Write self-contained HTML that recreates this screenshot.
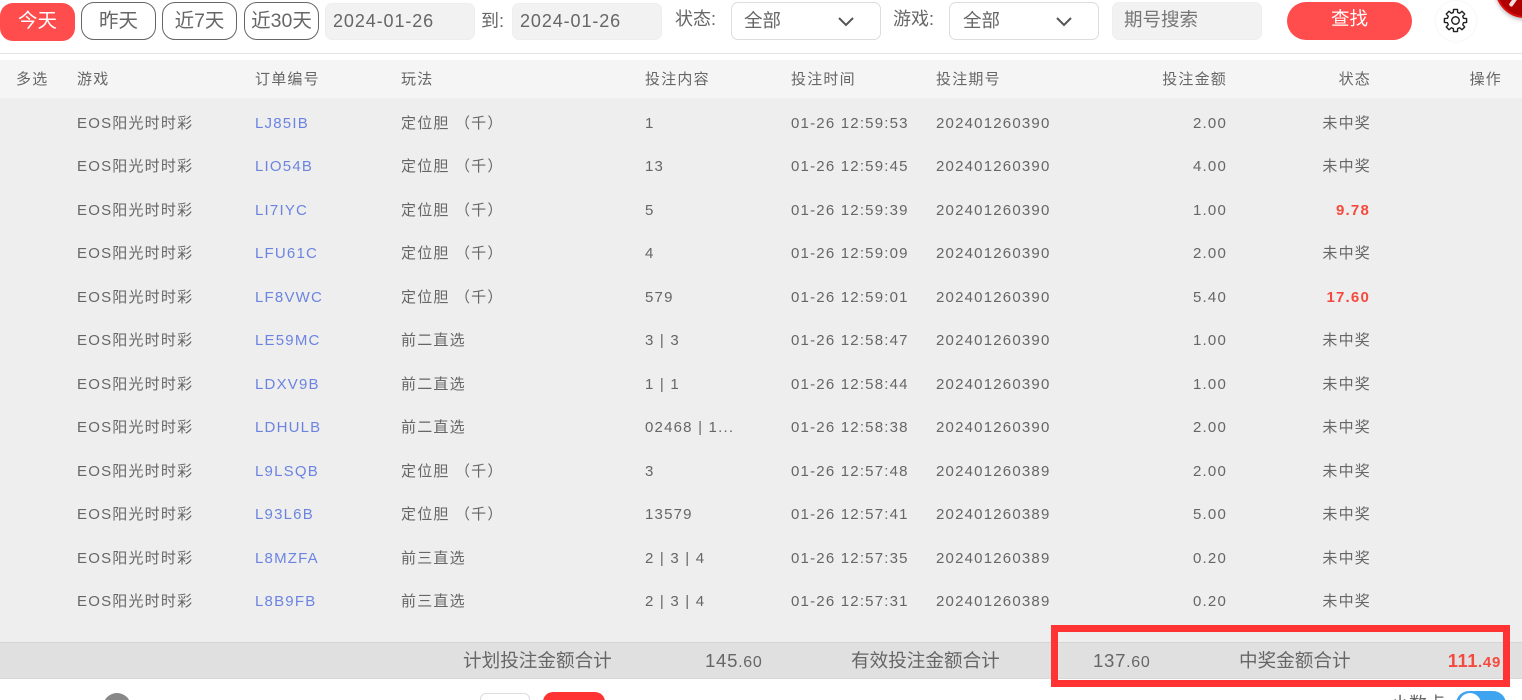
<!DOCTYPE html>
<html style="height:700px;overflow:hidden"><head><meta charset="utf-8"><style>
html,body{margin:0;padding:0}
body{width:1522px;height:700px;overflow:hidden;background:#fff;font-family:"Liberation Sans","Noto Sans CJK SC",sans-serif;color:#666}
#p{position:relative;width:1522px;height:700px;overflow:hidden;background:#fff}
.a{position:absolute;white-space:nowrap}
.b{position:absolute;box-sizing:border-box;top:2px;height:38px;border:1px solid #666;border-radius:13px;font-size:19.5px;line-height:36px;text-align:center;color:#666;background:#fff}
.i{position:absolute;box-sizing:border-box;top:3px;height:37px;background:#f2f2f2;border:1px solid #eee;border-radius:7px;font-size:18px;line-height:35px;color:#666;letter-spacing:.9px}
.s{position:absolute;box-sizing:border-box;top:2px;height:38px;background:#fff;border:1px solid #ddd;border-radius:7px;font-size:18.5px;line-height:36px;color:#666}
.l{position:absolute;font-size:18px;line-height:22px;top:8px;color:#666;white-space:nowrap}
.h,.c{position:absolute;font-size:15px;line-height:20px;white-space:nowrap;color:#666;letter-spacing:1.2px;margin-top:1px}
.r{text-align:right}
.k{color:#6c84e0}
.w{color:#f5493d;font-weight:bold;margin-right:1px}
.f{position:absolute;top:650px;font-size:18.6px;line-height:22px;color:#666;white-space:nowrap}
.n{letter-spacing:.7px}
.n span{font-size:16px}
</style></head><body><div id="p">
<div class="a" style="left:0;top:3px;width:75px;height:38px;background:#ff4d4d;border-radius:13px;color:#fff;font-size:19.5px;line-height:37px;text-align:center">今天</div>
<div class="b" style="left:81px;width:75px">昨天</div>
<div class="b" style="left:162px;width:75px">近7天</div>
<div class="b" style="left:244px;width:75px">近30天</div>
<div class="i" style="left:325px;width:150px;padding-left:7px">2024-01-26</div>
<div class="l" style="left:481px;top:10px">到:</div>
<div class="i" style="left:512px;width:150px;padding-left:7px">2024-01-26</div>
<div class="l" style="left:675px">状态:</div>
<div class="s" style="left:731px;width:150px;padding-left:12px">全部<svg style="position:absolute;left:105px;top:13px" width="18" height="12" viewBox="0 0 18 12"><path d="M2 2l7 7 7-7" fill="none" stroke="#555" stroke-width="2"/></svg></div>
<div class="l" style="left:893px">游戏:</div>
<div class="s" style="left:949px;width:150px;padding-left:13px">全部<svg style="position:absolute;left:105px;top:13px" width="18" height="12" viewBox="0 0 18 12"><path d="M2 2l7 7 7-7" fill="none" stroke="#555" stroke-width="2"/></svg></div>
<div class="i" style="left:1112px;top:2px;height:38px;width:150px;padding-left:11px;color:#777;letter-spacing:0;line-height:34px;font-size:18.5px">期号搜索</div>
<div class="a" style="left:1287px;top:2px;width:125px;height:38px;background:#ff4d4d;border-radius:19px;color:#fff;font-size:18.5px;line-height:34px;text-align:center">查找</div>
<div class="a" style="left:1436px;top:1px;width:40px;height:40px;border-radius:50%;background:#fff;box-shadow:0 0 3px #eee"></div>
<svg class="a" style="left:1443px;top:8px" width="25" height="25" viewBox="-12 -12 24 24" fill="none" stroke="#222" stroke-width="1.35" stroke-linejoin="round"><circle r="3.6"/><path d="M7.73-2.07L10.64-1.88V1.88L7.73 2.07L6.93 4L8.85 6.19L6.19 8.85L4 6.93L2.07 7.73L1.88 10.64H-1.88L-2.07 7.73L-4 6.93L-6.19 8.85L-8.85 6.19L-6.93 4L-7.73 2.07L-10.64 1.88V-1.88L-7.73-2.07L-6.93-4L-8.85-6.19L-6.19-8.85L-4-6.93L-2.07-7.73L-1.88-10.64H1.88L2.07-7.73L4-6.93L6.19-8.85L8.85-6.19L6.93-4Z"/></svg>
<div class="a" style="left:1495px;top:-42px;width:60px;height:60px;border-radius:50%;background:#b00000;border:2px solid #d80f0f;box-sizing:border-box;box-shadow:0 2px 4px #bbb"></div>
<div class="a" style="left:1511px;top:-3px;width:4px;height:10px;background:#f0e0e0;border-radius:2px;transform:rotate(35deg)"></div>

<div class="a" style="left:0;top:53px;width:1522px;height:1px;background:#e4e4e4"></div>
<div class="a" style="left:0;top:60px;width:1522px;height:38px;background:#f5f5f5"></div>
<div class="a" style="left:0;top:98px;width:1522px;height:544px;background:#eee"></div>

<div class="h" style="left:16px;top:69px">多选</div>
<div class="h" style="left:77px;top:69px">游戏</div>
<div class="h" style="left:255px;top:69px">订单编号</div>
<div class="h" style="left:401px;top:69px">玩法</div>
<div class="h" style="left:645px;top:69px">投注内容</div>
<div class="h" style="left:791px;top:69px">投注时间</div>
<div class="h" style="left:936px;top:69px">投注期号</div>
<div class="h r" style="right:295px;top:69px">投注金额</div>
<div class="h r" style="right:151px;top:69px">状态</div>
<div class="h r" style="right:20px;top:69px">操作</div>

<div class="c" style="left:77px;top:113px">EOS阳光时时彩</div><div class="c k" style="left:255px;top:113px">LJ85IB</div><div class="c" style="left:401px;top:113px">定位胆 （千）</div><div class="c" style="left:645px;top:113px">1</div><div class="c" style="left:791px;top:113px">01-26 12:59:53</div><div class="c" style="left:936px;top:113px">202401260390</div><div class="c r" style="right:295px;top:113px">2.00</div><div class="c r" style="right:151px;top:113px">未中奖</div>
<div class="c" style="left:77px;top:156px">EOS阳光时时彩</div><div class="c k" style="left:255px;top:156px">LIO54B</div><div class="c" style="left:401px;top:156px">定位胆 （千）</div><div class="c" style="left:645px;top:156px">13</div><div class="c" style="left:791px;top:156px">01-26 12:59:45</div><div class="c" style="left:936px;top:156px">202401260390</div><div class="c r" style="right:295px;top:156px">4.00</div><div class="c r" style="right:151px;top:156px">未中奖</div>
<div class="c" style="left:77px;top:200px">EOS阳光时时彩</div><div class="c k" style="left:255px;top:200px">LI7IYC</div><div class="c" style="left:401px;top:200px">定位胆 （千）</div><div class="c" style="left:645px;top:200px">5</div><div class="c" style="left:791px;top:200px">01-26 12:59:39</div><div class="c" style="left:936px;top:200px">202401260390</div><div class="c r" style="right:295px;top:200px">1.00</div><div class="c r w" style="right:151px;top:200px">9.78</div>
<div class="c" style="left:77px;top:243px">EOS阳光时时彩</div><div class="c k" style="left:255px;top:243px">LFU61C</div><div class="c" style="left:401px;top:243px">定位胆 （千）</div><div class="c" style="left:645px;top:243px">4</div><div class="c" style="left:791px;top:243px">01-26 12:59:09</div><div class="c" style="left:936px;top:243px">202401260390</div><div class="c r" style="right:295px;top:243px">2.00</div><div class="c r" style="right:151px;top:243px">未中奖</div>
<div class="c" style="left:77px;top:287px">EOS阳光时时彩</div><div class="c k" style="left:255px;top:287px">LF8VWC</div><div class="c" style="left:401px;top:287px">定位胆 （千）</div><div class="c" style="left:645px;top:287px">579</div><div class="c" style="left:791px;top:287px">01-26 12:59:01</div><div class="c" style="left:936px;top:287px">202401260390</div><div class="c r" style="right:295px;top:287px">5.40</div><div class="c r w" style="right:151px;top:287px">17.60</div>
<div class="c" style="left:77px;top:330px">EOS阳光时时彩</div><div class="c k" style="left:255px;top:330px">LE59MC</div><div class="c" style="left:401px;top:330px">前二直选</div><div class="c" style="left:645px;top:330px">3 | 3</div><div class="c" style="left:791px;top:330px">01-26 12:58:47</div><div class="c" style="left:936px;top:330px">202401260390</div><div class="c r" style="right:295px;top:330px">1.00</div><div class="c r" style="right:151px;top:330px">未中奖</div>
<div class="c" style="left:77px;top:374px">EOS阳光时时彩</div><div class="c k" style="left:255px;top:374px">LDXV9B</div><div class="c" style="left:401px;top:374px">前二直选</div><div class="c" style="left:645px;top:374px">1 | 1</div><div class="c" style="left:791px;top:374px">01-26 12:58:44</div><div class="c" style="left:936px;top:374px">202401260390</div><div class="c r" style="right:295px;top:374px">1.00</div><div class="c r" style="right:151px;top:374px">未中奖</div>
<div class="c" style="left:77px;top:417px">EOS阳光时时彩</div><div class="c k" style="left:255px;top:417px">LDHULB</div><div class="c" style="left:401px;top:417px">前二直选</div><div class="c" style="left:645px;top:417px">02468 | 1...</div><div class="c" style="left:791px;top:417px">01-26 12:58:38</div><div class="c" style="left:936px;top:417px">202401260390</div><div class="c r" style="right:295px;top:417px">2.00</div><div class="c r" style="right:151px;top:417px">未中奖</div>
<div class="c" style="left:77px;top:461px">EOS阳光时时彩</div><div class="c k" style="left:255px;top:461px">L9LSQB</div><div class="c" style="left:401px;top:461px">定位胆 （千）</div><div class="c" style="left:645px;top:461px">3</div><div class="c" style="left:791px;top:461px">01-26 12:57:48</div><div class="c" style="left:936px;top:461px">202401260389</div><div class="c r" style="right:295px;top:461px">2.00</div><div class="c r" style="right:151px;top:461px">未中奖</div>
<div class="c" style="left:77px;top:504px">EOS阳光时时彩</div><div class="c k" style="left:255px;top:504px">L93L6B</div><div class="c" style="left:401px;top:504px">定位胆 （千）</div><div class="c" style="left:645px;top:504px">13579</div><div class="c" style="left:791px;top:504px">01-26 12:57:41</div><div class="c" style="left:936px;top:504px">202401260389</div><div class="c r" style="right:295px;top:504px">5.00</div><div class="c r" style="right:151px;top:504px">未中奖</div>
<div class="c" style="left:77px;top:548px">EOS阳光时时彩</div><div class="c k" style="left:255px;top:548px">L8MZFA</div><div class="c" style="left:401px;top:548px">前三直选</div><div class="c" style="left:645px;top:548px">2 | 3 | 4</div><div class="c" style="left:791px;top:548px">01-26 12:57:35</div><div class="c" style="left:936px;top:548px">202401260389</div><div class="c r" style="right:295px;top:548px">0.20</div><div class="c r" style="right:151px;top:548px">未中奖</div>
<div class="c" style="left:77px;top:591px">EOS阳光时时彩</div><div class="c k" style="left:255px;top:591px">L8B9FB</div><div class="c" style="left:401px;top:591px">前三直选</div><div class="c" style="left:645px;top:591px">2 | 3 | 4</div><div class="c" style="left:791px;top:591px">01-26 12:57:31</div><div class="c" style="left:936px;top:591px">202401260389</div><div class="c r" style="right:295px;top:591px">0.20</div><div class="c r" style="right:151px;top:591px">未中奖</div>

<div class="a" style="left:0;top:642px;width:1522px;height:37px;background:#e0e0e0;border-top:1px solid #d4d4d4;border-bottom:1px solid #d8d8d8;box-sizing:border-box"></div>
<div class="f" style="left:463px">计划投注金额合计</div>
<div class="f n" style="left:705px">145<span>.60</span></div>
<div class="f" style="left:851px">有效投注金额合计</div>
<div class="f n" style="left:1093px">137<span>.60</span></div>
<div class="f" style="left:1239px">中奖金额合计</div>
<div class="f n" style="right:21px;font-size:18px;color:#f5493d;font-weight:bold">111<span style="font-size:15px">.49</span></div>
<div class="a" style="left:1051px;top:625px;width:459px;height:62px;border:7px solid #f33;box-sizing:border-box"></div>

<div class="a" style="left:103px;top:693px;width:28px;height:28px;border-radius:50%;background:#888"></div>
<div class="a" style="left:480px;top:693px;width:50px;height:30px;border:1px solid #ddd;border-radius:6px;box-sizing:border-box;background:#fff"></div>
<div class="a" style="left:543px;top:692px;width:62px;height:30px;border-radius:10px;background:#f33"></div>
<div class="a" style="left:1391px;top:693px;font-size:18px;line-height:22px;color:#666">小数点</div>
<div class="a" style="left:1456px;top:691px;width:50px;height:26px;border-radius:13px;background:#3fa4f0"></div>
<div class="a" style="left:1459px;top:693px;width:22px;height:22px;border-radius:50%;background:#fff"></div>
</div></body></html>
